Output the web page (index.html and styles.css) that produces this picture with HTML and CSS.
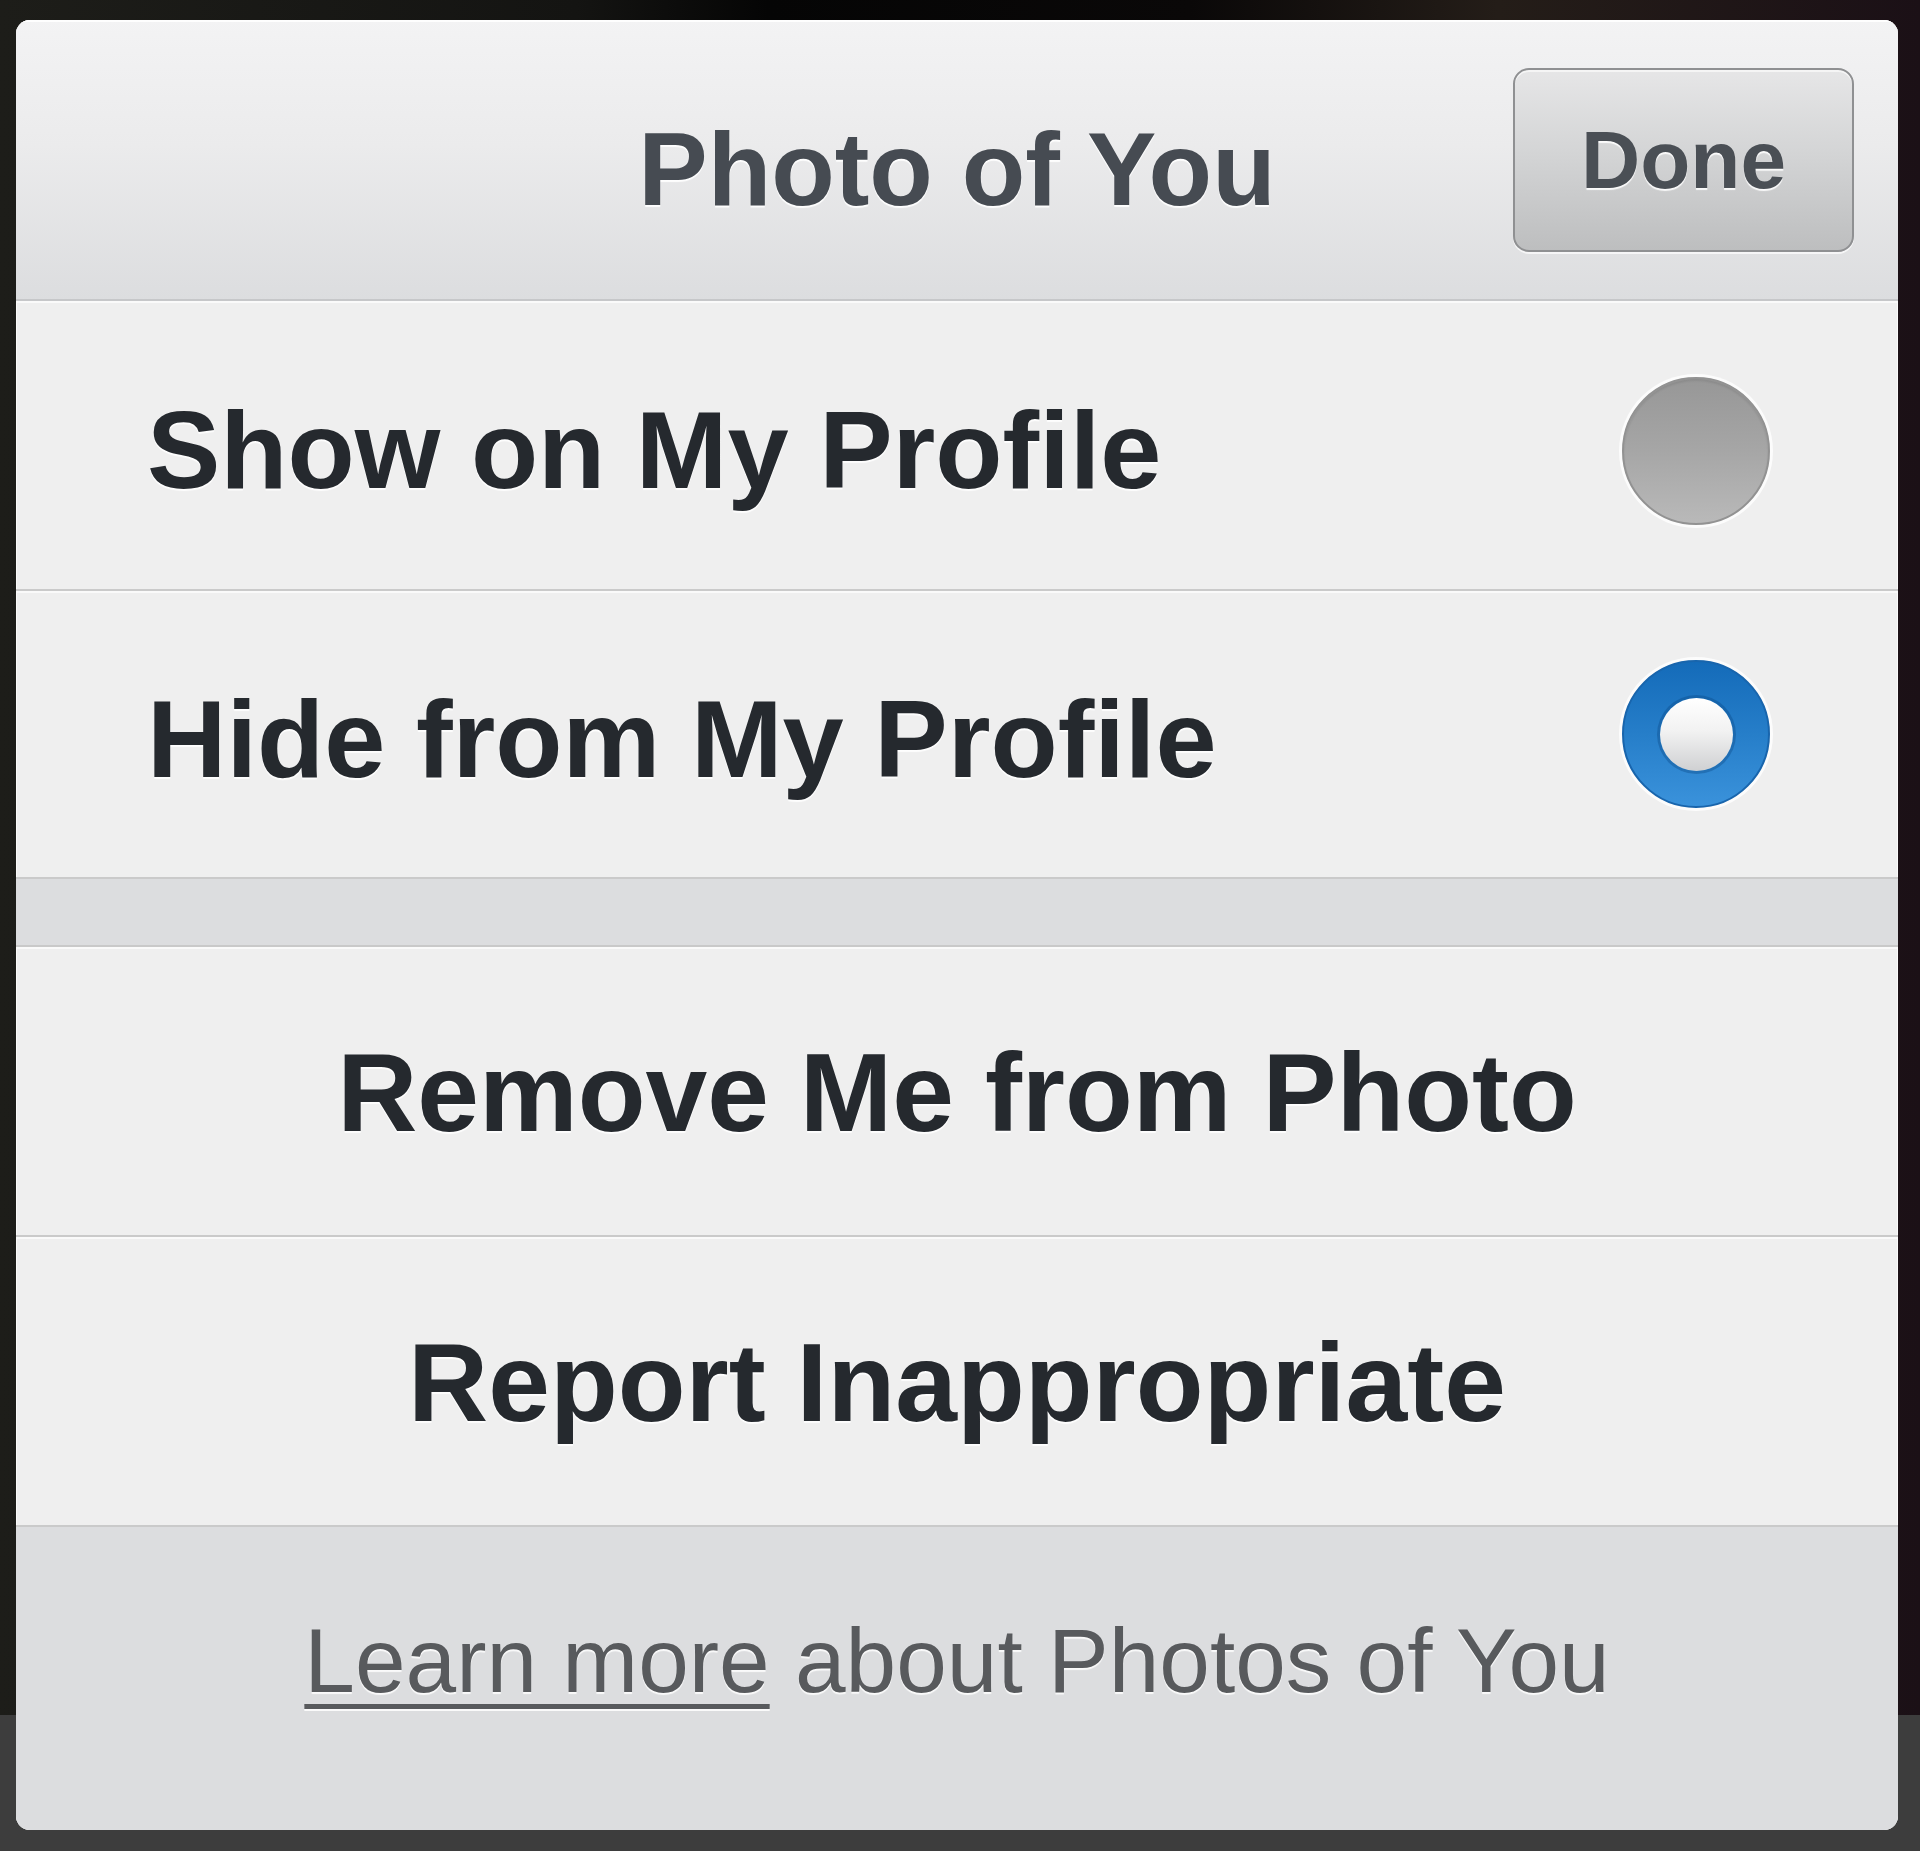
FILE: index.html
```html
<!DOCTYPE html>
<html lang="en">
<head>
<meta charset="utf-8">
<title>Photo of You</title>
<link rel="stylesheet" href="styles.css">
</head>
<body>
  <div class="sheet">
    <header class="sheet-header">
      <span class="spacer"></span>
      <h1 class="sheet-title">Photo of You</h1>
      <div class="header-actions">
        <button class="done-btn" type="button">Done</button>
      </div>
    </header>

    <div class="option-row option-row-first">
      <span class="option-label">Show on My Profile</span>
      <span class="radio radio-off"></span>
    </div>
    <div class="option-row">
      <span class="option-label">Hide from My Profile</span>
      <span class="radio radio-on"><span class="radio-dot"></span></span>
    </div>

    <div class="group-gap"></div>

    <div class="action-row">Remove Me from Photo</div>
    <div class="action-row action-row-last">Report Inappropriate</div>

    <footer class="sheet-footer">
      <p class="footer-text"><span class="learn-link">Learn more</span> about Photos of You</p>
    </footer>
  </div>
</body>
</html>
```

FILE: styles.css
```css
html, body {
  margin: 0;
  padding: 0;
}

body {
  width: 1920px;
  height: 1851px;
  box-sizing: border-box;
  padding: 20px 22px 21px 16px;
  background:
    linear-gradient(90deg, #1d1d19 0%, #141412 30%, #050505 40%, #0a0808 62%, #241d18 78%, #1b1016 100%);
  font-family: "Liberation Sans", Arial, Helvetica, sans-serif;
  position: relative;
  overflow: hidden;
}

body::after {
  content: "";
  position: absolute;
  left: 0;
  right: 0;
  bottom: 0;
  height: 136px;
  background: #3d3d3d;
  z-index: 0;
}

.sheet {
  position: relative;
  z-index: 1;
  width: 1882px;
  height: 1810px;
  border-radius: 14px;
  overflow: hidden;
  background: #efefef;
  box-shadow: inset 0 0 0 1px rgba(255,255,255,0.7);
  display: flex;
  flex-direction: column;
}

.sheet-header {
  height: 279px;
  flex: none;
  border-bottom: 2px solid #c6c7c9;
  background: linear-gradient(180deg, #f3f3f4 0%, #ebebec 45%, #dcdddf 100%);
  display: grid;
  grid-template-columns: 1fr auto 1fr;
  align-items: center;
  box-shadow: inset 0 2px 0 rgba(255,255,255,0.9);
}

.sheet-title {
  margin: 20px 0 0;
  font-size: 104px;
  font-weight: 700;
  color: #464b52;
  text-shadow: 0 2px 1px rgba(255,255,255,0.95);
  line-height: 1.15;
}

.header-actions {
  display: flex;
  justify-content: flex-end;
  padding-right: 44px;
}

.done-btn {
  width: 341px;
  height: 184px;
  box-sizing: border-box;
  border: 2px solid #8f9092;
  border-radius: 16px;
  background: linear-gradient(180deg, #e6e6e7 0%, #d4d5d6 45%, #bdbebf 100%);
  box-shadow: inset 0 2px 0 rgba(255,255,255,0.6), 0 2px 0 rgba(255,255,255,0.7);
  font-family: "Liberation Sans", Arial, Helvetica, sans-serif;
  font-size: 82px;
  font-weight: 700;
  color: #4a4f55;
  text-shadow: 0 2px 1px rgba(255,255,255,0.9);
  padding: 0;
  line-height: 1;
}

.option-row {
  flex: none;
  height: 286px;
  border-bottom: 2px solid #cacaca;
  box-shadow: inset 0 2px 0 #fafafa;
  display: flex;
  align-items: center;
  justify-content: space-between;
  padding: 0 128px 0 131px;
}

.option-row-first {
  height: 288px;
}

.option-label {
  font-size: 110px;
  font-weight: 700;
  color: #25292e;
  text-shadow: 0 2px 1px rgba(255,255,255,0.9);
  padding-top: 8px;
}

.radio {
  width: 148px;
  height: 148px;
  border-radius: 50%;
  box-sizing: border-box;
  flex: none;
  display: flex;
  align-items: center;
  justify-content: center;
}

.radio-off {
  margin-top: 12px;
  background: linear-gradient(180deg, #979797 0%, #a6a6a6 50%, #b9b9b9 100%);
  border: 2px solid #929292;
  box-shadow: 0 0 0 3px rgba(255,255,255,0.8), inset 0 2px 2px rgba(0,0,0,0.08);
}

.radio-on {
  background: linear-gradient(180deg, #146bb9 0%, #267ec9 50%, #3a92db 100%);
  border: 2px solid #1865ad;
  box-shadow: 0 0 0 3px rgba(255,255,255,0.8);
}

.radio-dot {
  width: 73px;
  height: 73px;
  border-radius: 50%;
  background: linear-gradient(180deg, #ffffff 0%, #f2f2f2 45%, #cfd0d2 100%);
  box-shadow: 0 0 0 3px rgba(10,70,130,0.35);
}

.group-gap {
  flex: none;
  height: 66px;
  background: #dcdddf;
  border-bottom: 2px solid #c9c9c9;
}

.action-row {
  flex: none;
  height: 284px;
  border-bottom: 2px solid #cacaca;
  box-shadow: inset 0 2px 0 #fafafa;
  display: flex;
  align-items: center;
  justify-content: center;
  font-size: 111px;
  font-weight: 700;
  color: #25292e;
  text-shadow: 0 2px 1px rgba(255,255,255,0.9);
  padding-top: 4px;
}

.action-row-last {
  height: 284px;
}

.sheet-footer {
  flex: 1;
  background: #dcdddf;
  display: flex;
  align-items: center;
  justify-content: center;
  padding-bottom: 36px;
}

.footer-text {
  margin: 0;
  font-size: 91px;
  font-weight: 400;
  color: #585a5d;
  text-shadow: 0 2px 1px rgba(255,255,255,0.85);
}

.learn-link {
  text-decoration: underline;
  text-decoration-thickness: 5px;
  text-underline-offset: 12px;
}
```
